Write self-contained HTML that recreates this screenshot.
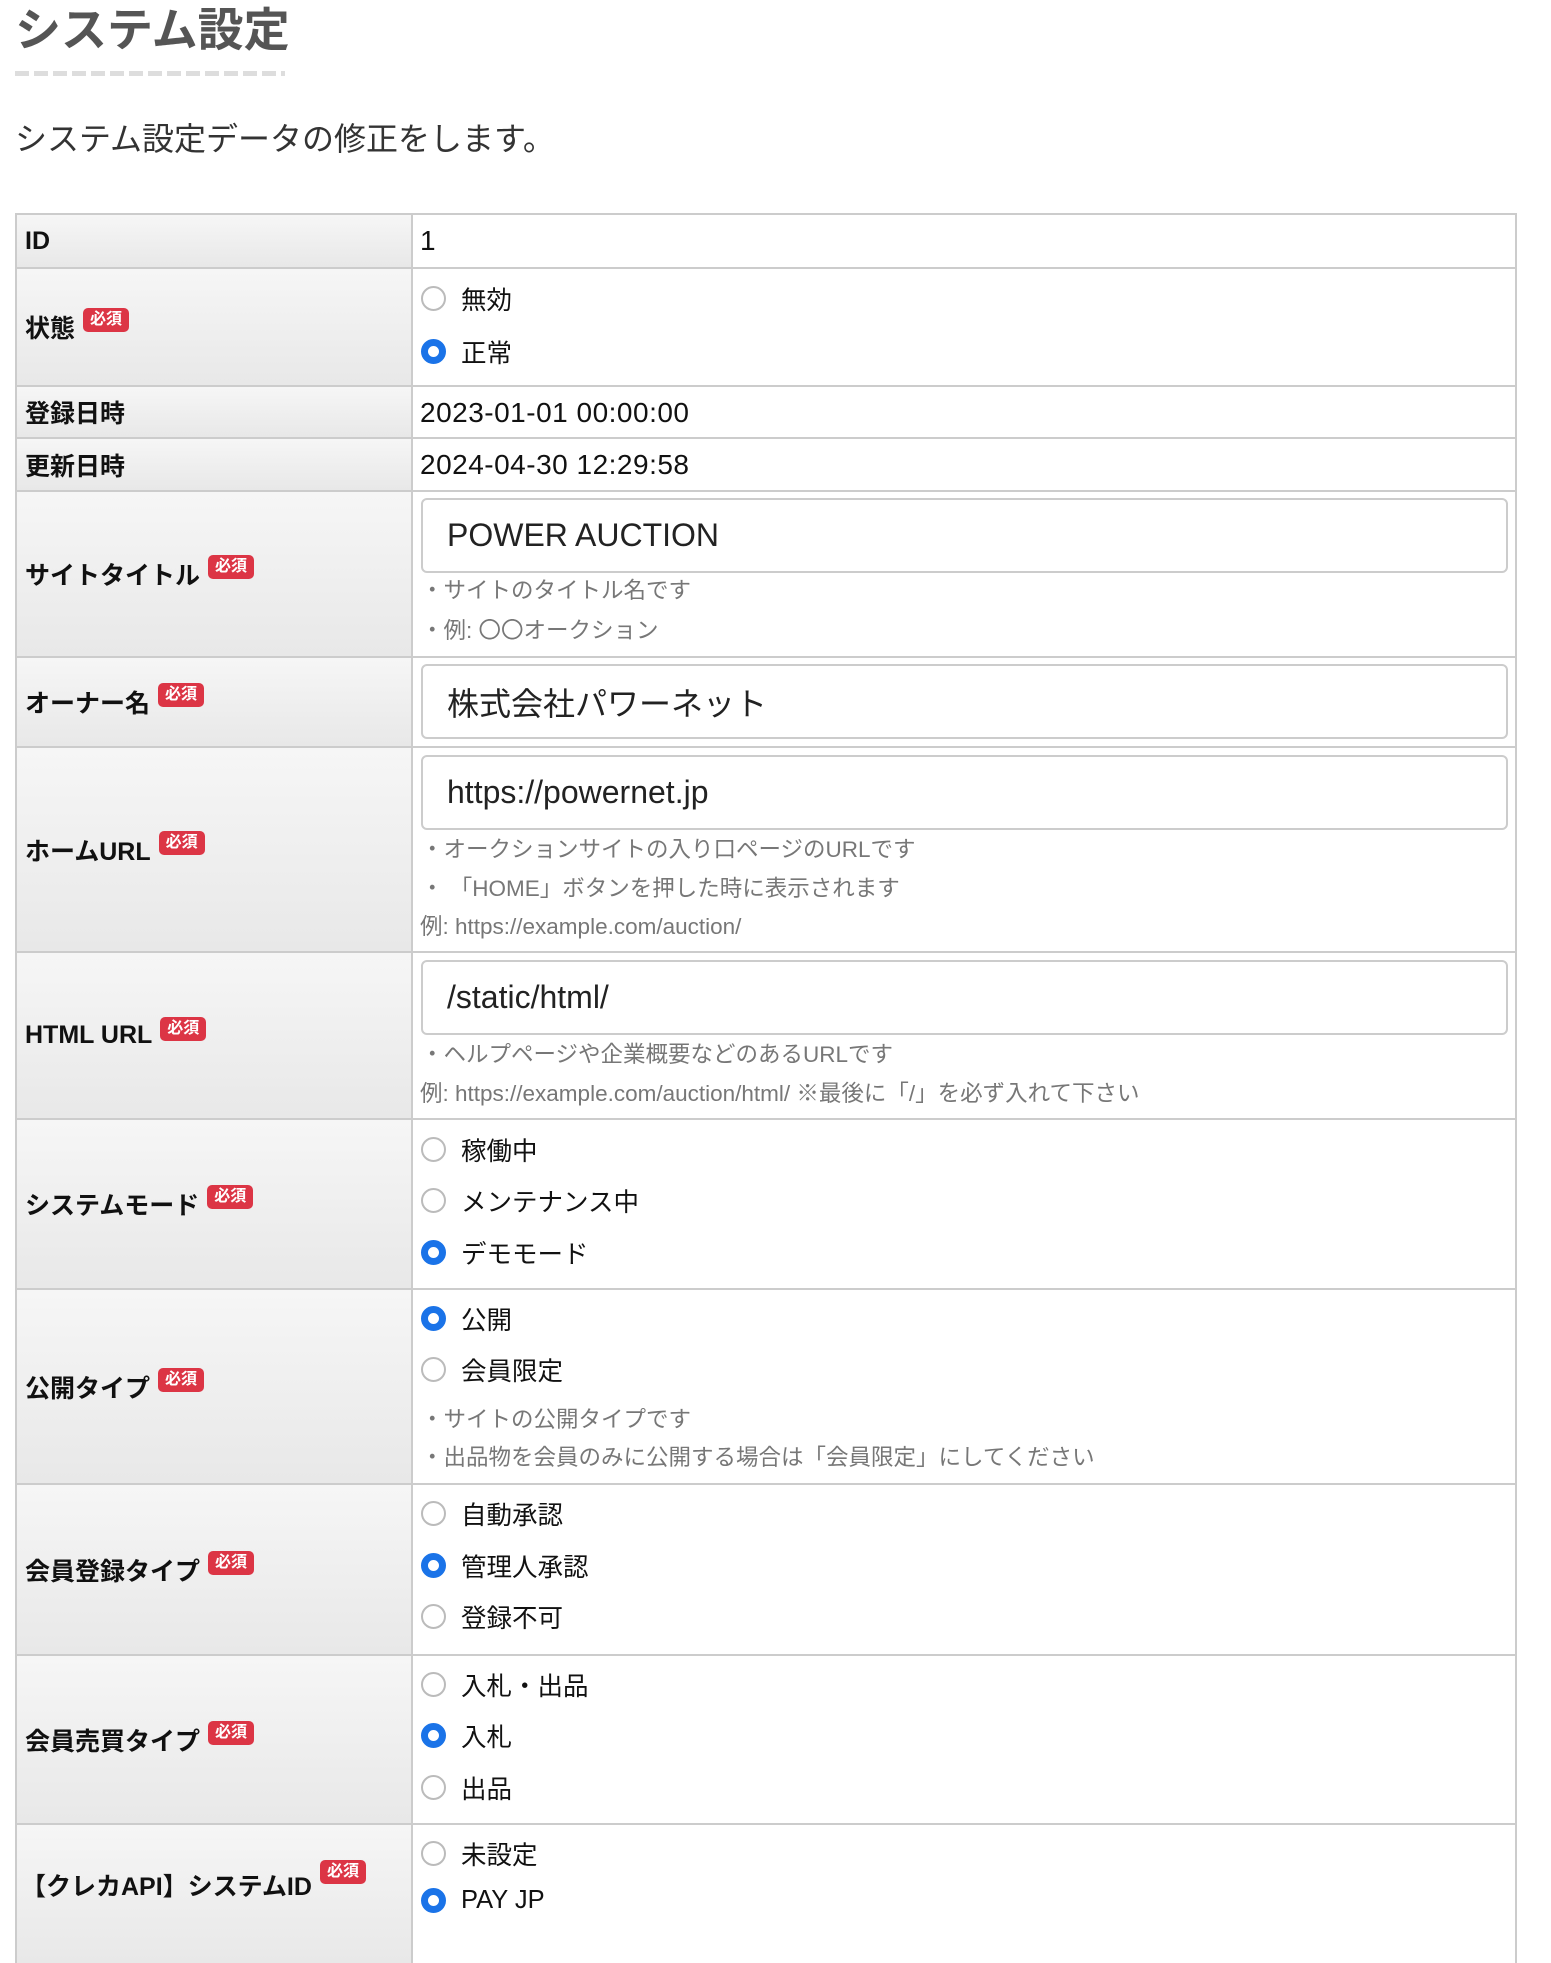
<!DOCTYPE html>
<html><head><meta charset="utf-8">
<style>
*{box-sizing:border-box;margin:0;padding:0}
body{width:1551px;height:1924px;overflow:hidden;background:#fff;font-family:"Liberation Sans","Noto Sans CJK JP",sans-serif;color:#222;position:relative}
h1{position:absolute;left:15px;top:0px;font-size:46px;font-weight:bold;color:#555;line-height:60px}
.dash{position:absolute;left:15px;top:71px;width:270px;height:5px;background:repeating-linear-gradient(90deg,#ddd 0 14px,transparent 14px 19px)}
.sub{position:absolute;left:15px;top:117px;font-size:32px;line-height:44px;color:#333}
.row{position:absolute;left:15px;width:1502px;border:2px solid #ccc;border-bottom:none}
.lab{position:absolute;left:0;top:0;bottom:0;width:396px;background:linear-gradient(#f6f6f6,#e8e8e8);border-right:2px solid #ccc;display:flex;align-items:center;padding-left:8px;font-size:25px;font-weight:bold;color:#111}
.badge{display:inline-block;background:#dc3545;color:#fff;font-size:16px;font-weight:bold;border-radius:5px;padding:0 7px;height:24px;line-height:24px;margin-left:8px;position:relative;top:-7px}
.val{position:absolute;left:403px;font-size:28px;line-height:32px;color:#111;letter-spacing:0.5px}
.inp{position:absolute;left:404px;width:1087px;border:2px solid #ccc;border-radius:6px;font-size:32px;padding-left:24px;display:flex;align-items:center;color:#222}
.hint{position:absolute;left:404px;font-size:22.5px;color:#777;line-height:26px}
.rad{position:absolute;left:404px;display:flex;align-items:center;font-size:25.5px;color:#111}
.rad i{display:inline-block;width:25px;height:25px;border-radius:50%;border:2px solid #bbb;margin-right:15px;background:#fff}
.rad i.on{border:7px solid #1a73e8}
</style></head><body>
<h1>システム設定</h1>
<div class="dash"></div>
<div class="sub">システム設定データの修正をします。</div>

<div class="row" style="top:213px;height:54px"><div class="lab">ID</div><div class="val" style="top:10px">1</div></div>
<div class="row" style="top:267px;height:118px"><div class="lab">状態<span class="badge">必須</span></div>
<div class="rad" style="top:11px"><i></i>無効</div><div class="rad" style="top:64px"><i class="on"></i>正常</div></div>
<div class="row" style="top:385px;height:52px"><div class="lab">登録日時</div><div class="val" style="top:10px">2023-01-01 00:00:00</div></div>
<div class="row" style="top:437px;height:53px"><div class="lab">更新日時</div><div class="val" style="top:10px">2024-04-30 12:29:58</div></div>
<div class="row" style="top:490px;height:166px"><div class="lab">サイトタイトル<span class="badge">必須</span></div>
<div class="inp" style="top:6px;height:75px">POWER AUCTION</div>
<div class="hint" style="top:86px">・サイトのタイトル名です</div><div class="hint" style="top:126px">・例: 〇〇オークション</div></div>
<div class="row" style="top:656px;height:90px"><div class="lab">オーナー名<span class="badge">必須</span></div>
<div class="inp" style="top:6px;height:75px">株式会社パワーネット</div></div>
<div class="row" style="top:746px;height:205px"><div class="lab">ホームURL<span class="badge">必須</span></div>
<div class="inp" style="top:7px;height:75px">https://powernet.jp</div>
<div class="hint" style="top:89px">・オークションサイトの入り口ページのURLです</div>
<div class="hint" style="top:128px">・ 「HOME」ボタンを押した時に表示されます</div>
<div class="hint" style="top:166px;left:403px">例: https://example.com/auction/</div></div>
<div class="row" style="top:951px;height:167px"><div class="lab">HTML URL<span class="badge">必須</span></div>
<div class="inp" style="top:7px;height:75px">/static/html/</div>
<div class="hint" style="top:89px">・ヘルプページや企業概要などのあるURLです</div>
<div class="hint" style="top:128px;left:403px">例: https://example.com/auction/html/ ※最後に「/」を必ず入れて下さい</div></div>
<div class="row" style="top:1118px;height:170px"><div class="lab">システムモード<span class="badge">必須</span></div>
<div class="rad" style="top:11px"><i></i>稼働中</div><div class="rad" style="top:62px"><i></i>メンテナンス中</div><div class="rad" style="top:114px"><i class="on"></i>デモモード</div></div>
<div class="row" style="top:1288px;height:195px"><div class="lab">公開タイプ<span class="badge">必須</span></div>
<div class="rad" style="top:10px"><i class="on"></i>公開</div><div class="rad" style="top:61px"><i></i>会員限定</div>
<div class="hint" style="top:117px">・サイトの公開タイプです</div><div class="hint" style="top:155px">・出品物を会員のみに公開する場合は「会員限定」にしてください</div></div>
<div class="row" style="top:1483px;height:171px"><div class="lab">会員登録タイプ<span class="badge">必須</span></div>
<div class="rad" style="top:10px"><i></i>自動承認</div><div class="rad" style="top:62px"><i class="on"></i>管理人承認</div><div class="rad" style="top:113px"><i></i>登録不可</div></div>
<div class="row" style="top:1654px;height:169px"><div class="lab">会員売買タイプ<span class="badge">必須</span></div>
<div class="rad" style="top:10px"><i></i>入札・出品</div><div class="rad" style="top:61px"><i class="on"></i>入札</div><div class="rad" style="top:113px"><i></i>出品</div></div>
<div class="row" style="top:1823px;height:140px"><div class="lab" style="padding-left:4px;align-items:flex-start;padding-top:42px">【クレカAPI】システムID<span class="badge">必須</span></div>
<div class="rad" style="top:10px"><i></i>未設定</div><div class="rad" style="top:61px"><i class="on"></i>PAY JP</div></div>
</body></html>
